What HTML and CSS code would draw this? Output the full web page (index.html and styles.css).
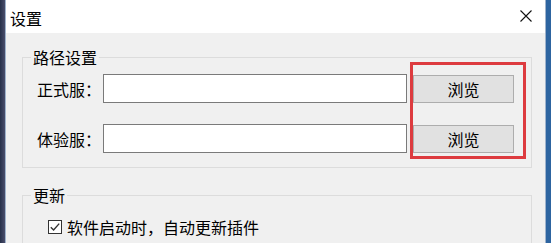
FILE: index.html
```html
<!DOCTYPE html>
<html lang="zh-CN">
<head>
    <meta charset="UTF-8">
    <meta name="viewport" content="width=device-width, initial-scale=1.0">
    <title>设置</title>
    <link rel="stylesheet" href="styles.css">
</head>
<body>
    <div class="desktop">
        <div class="window">
            <div class="titlebar">
                <span class="title">设置</span>
                <svg class="close-icon" width="12" height="12" viewBox="0 0 12 12">
                    <path d="M0.5 0.5 L11.5 11.5 M11.5 0.5 L0.5 11.5" stroke="#111" stroke-width="1.1" fill="none"/>
                </svg>
            </div>
            <div class="content">
                <fieldset class="group">
                    <legend>路径设置</legend>
                    <div class="rows">
                        <div class="row">
                            <label class="row-label" for="formal">正式服：</label>
                            <input class="path-input" type="text" id="formal">
                            <button class="browse-btn" type="button">浏览</button>
                        </div>
                        <div class="row">
                            <label class="row-label" for="trial">体验服：</label>
                            <input class="path-input" type="text" id="trial">
                            <button class="browse-btn" type="button">浏览</button>
                        </div>
                    </div>
                </fieldset>
                <fieldset class="group update-group">
                    <legend>更新</legend>
                    <label class="check">
                        <svg class="check-box" width="14" height="14" viewBox="0 0 14 14">
                            <rect x="0.5" y="0.5" width="13" height="13" fill="#fff" stroke="#333"/>
                            <path d="M2.8 7.2 L5.6 10 L11.2 3.6" stroke="#333" stroke-width="1.4" fill="none"/>
                        </svg>
                        软件启动时，自动更新插件
                    </label>
                </fieldset>
                <div class="highlight"></div>
            </div>
        </div>
    </div>
</body>
</html>
```

FILE: styles.css
```css
* {
    margin: 0;
    padding: 0;
    box-sizing: border-box;
}

body {
    width: 551px;
    height: 243px;
    overflow: hidden;
    font-family: "Noto Sans CJK SC", "Microsoft YaHei", sans-serif;
    font-size: 16px;
    color: #000;
    background: linear-gradient(to right, #26304a 0, #4a4e6c 5px, #3b76b2 5px, #2d64a0 100%);
}

.desktop {
    display: flex;
    height: 243px;
    padding-left: 5px;
}

.window {
    width: 541px;
    display: flex;
    flex-direction: column;
    background-color: #f0f0f0;
    border-left: 1px solid #9fb3cc;
    border-right: 1px solid #9fb3cc;
}

.titlebar {
    height: 33px;
    flex: none;
    display: flex;
    justify-content: space-between;
    align-items: flex-start;
    padding: 10px 13px 0 4px;
    background-color: #fff;
}

.title {
    font-size: 16px;
    line-height: 16px;
}

.content {
    position: relative;
    flex: 1;
    padding: 16px 13px 0 16px;
}

.group {
    border: 1px solid #dcdcdc;
    padding: 0;
    min-width: 0;
}

.group legend {
    margin-left: 8px;
    padding: 0 2px;
    font-size: 16px;
    line-height: 16px;
}

.rows {
    padding: 9px 15px 14px 14px;
}

.row {
    display: flex;
    align-items: center;
    height: 29px;
}

.row + .row {
    margin-top: 21px;
}

.row-label {
    flex: 0 0 66px;
    line-height: 18px;
}

.path-input {
    width: 304px;
    height: 29px;
    border: 1px solid #7a7a7a;
    background-color: #fff;
    outline: none;
}

.browse-btn {
    margin-left: 6px;
    width: 101px;
    height: 28px;
    border: 1px solid #adadad;
    background-color: #e1e1e1;
    font-family: inherit;
    font-size: 16px;
    color: #000;
}

.update-group {
    margin-top: 19px;
}

.check {
    display: flex;
    align-items: center;
    gap: 5px;
    padding: 15px 0 40px 25px;
    line-height: 18px;
}

.check-box {
    flex: none;
}

.highlight {
    position: absolute;
    left: 404px;
    top: 29px;
    width: 116px;
    height: 97px;
    border: 3px solid #dd3b3f;
}
```
